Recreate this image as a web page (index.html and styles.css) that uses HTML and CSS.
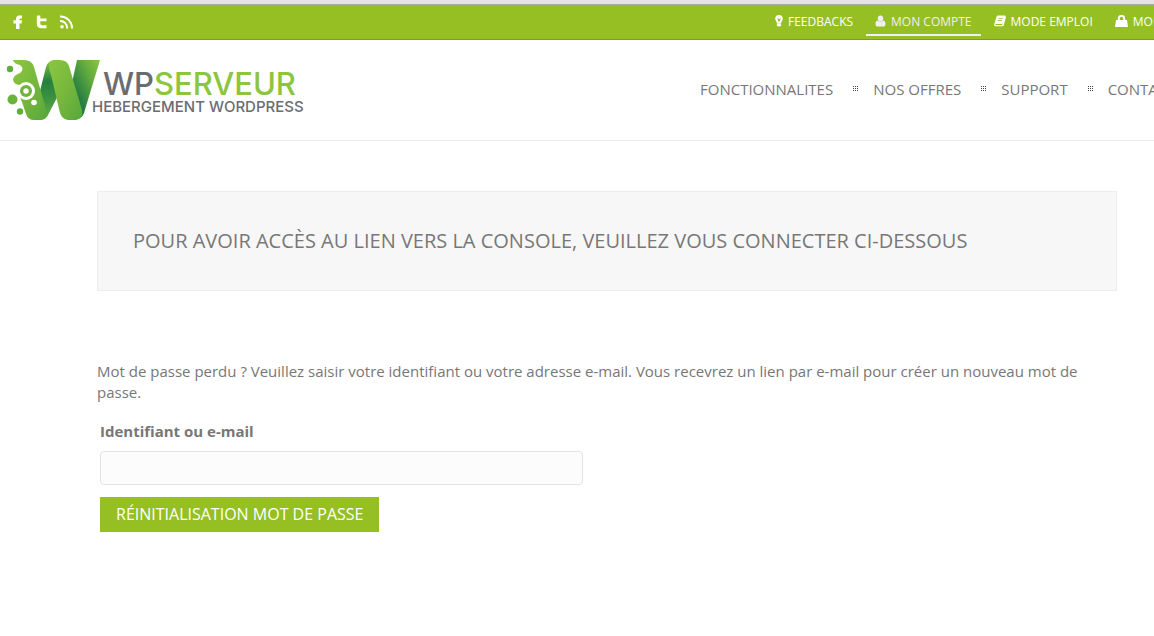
FILE: index.html
```html
<!DOCTYPE html>
<html lang="fr">
<head>
<meta charset="utf-8">
<meta name="viewport" content="width=device-width, initial-scale=1">
<title>WPServeur - Mot de passe perdu</title>
<link rel="stylesheet" href="styles.css">
</head>
<body>
<div class="topbar">
  <div class="social">
    <a href="#" aria-label="Facebook"><svg width="12" height="14" viewBox="0 0 12 14"><path d="M4 14V8.500H1.500V5.300H4V4C4 1.800 5.300 0.600 7 0.600H10V3.500H8.200Q7.500 3.500 7.500 4.300V5.300H10L9.600 8.500H7.500V14Z"/></svg></a>
    <a href="#" aria-label="Twitter"><svg width="12" height="14" viewBox="0 0 12 14"><path d="M1.200 0.500H4.300V3.500H10.500V6.200H4.300V8.500Q4.300 10.200 6 10.200H10.500V13.200H5.500Q0.800 13.200 0.800 8.500V1Z"/></svg></a>
    <a href="#" aria-label="RSS"><svg width="14" height="14" viewBox="0 0 14 14"><circle cx="2" cy="11.700" r="1.800"/><path class="wave" d="M0 6A6.700 6.700 0 0 1 7 13.500M0 1.500A11.500 11.500 0 0 1 12 13.500"/></svg></a>
  </div>
  <nav class="toplinks" aria-label="Compte">
    <a href="#"><svg width="8" height="12" viewBox="0 0 8 12"><path fill-rule="evenodd" d="M4 0A3.800 3.800 0 0 1 7.800 3.800C7.800 5.500 6.300 6.300 6.200 8H1.800C1.700 6.300 0.200 5.500 0.200 3.800A3.800 3.800 0 0 1 4 0ZM2.300 2.600L3.300 6.400H4.500L6 3.200L4 4.200Z"/><path d="M1.900 8.300H6.100V10.300Q5.800 11.500 4 11.500T1.900 10.300Z"/></svg>FEEDBACKS</a>
    <a href="#" class="current"><svg width="11" height="12" viewBox="0 0 10 12"><ellipse cx="5" cy="3.500" rx="2.700" ry="3.100"/><path d="M2.200 5.500C0.300 5.800 0 7.500 0 9Q0 11.500 1.500 11.500H8.500Q10 11.500 10 9C10 7.500 9.700 5.800 7.800 5.500Q5 8 2.200 5.500Z"/></svg>MON COMPTE</a>
    <a href="#"><svg width="12" height="12" viewBox="0 0 12 12"><path fill-rule="evenodd" d="M4 0.500H11L12 2L9.700 10.200Q9.500 11.300 8.300 11.300H1.300Q0 11 0.200 9.200L2.600 1.500Q3 0.500 4 0.500ZM4.500 3L4.300 3.700H8.500L8.700 3ZM3.900 5L3.700 5.700H7.900L8.100 5ZM1.500 9.100L1.300 10H8.200L9.900 4.300L8.400 9.100Z"/></svg>MODE EMPLOI</a>
    <a href="#"><svg width="13" height="12" viewBox="0 0 13 12"><path d="M1 5H12L13 12H0Z"/><path class="handle" d="M3.800 6.500V3.500A2.600 2.600 0 0 1 9.200 3.500V6.500"/></svg>MON PANIER</a>
  </nav>
</div>
<header class="header">
  <a href="#" class="logo">
    <svg class="mark" width="94" height="62" viewBox="0 0 94 62" aria-hidden="true">
      <defs>
        <linearGradient id="front" x1="0" y1="0" x2="1" y2="1"><stop offset="0" stop-color="#8cc63f"/><stop offset=".55" stop-color="#75b63c"/><stop offset="1" stop-color="#55a83d"/></linearGradient>
        <linearGradient id="back" x1="0" y1="0" x2="0" y2="1"><stop offset="0" stop-color="#86c23f"/><stop offset=".15" stop-color="#5aa83f"/><stop offset=".35" stop-color="#25803f"/><stop offset=".6" stop-color="#388f41"/><stop offset="1" stop-color="#69b13f"/></linearGradient>
        <linearGradient id="tail" x1="1" y1="0" x2="0" y2="1"><stop offset="0" stop-color="#8cc63f"/><stop offset=".3" stop-color="#63ac3f"/><stop offset=".7" stop-color="#1f7942"/><stop offset="1" stop-color="#1f7942"/></linearGradient>
      </defs>
      <path fill="url(#back)" d="M33 36L40 8Q42 1 50 1L57 27L43 54Q41 61 32 61Z"/>
      <path fill="url(#tail)" d="M71 1H94L78 54Q76 61 66 61L64 33Z"/>
      <path fill="url(#front)" d="M43 4Q45 1 50 1H54Q61 1 63 7L76 51Q78 60 69 61H62Q56 60 54 54L45 16Q42 8 43 4Z"/>
      <path fill="url(#front)" d="M7 1H18Q26 1 28 8L41 54Q42 61 34 61H28Q22 61 20 55L16 43Q12 36 18 33L13 26Q7 25 7 20Q8 16 14 14Q19 10 14 6Q8 5 7 1Z"/>
      <circle cx="20" cy="32" r="9" fill="#fff"/>
      <circle cx="20" cy="32" r="6" fill="#70b43c"/>
      <circle cx="20" cy="32" r="2.700" fill="#fff"/>
      <circle cx="28" cy="43.500" r="2.800" fill="#fff"/>
      <circle cx="4" cy="10" r="3.200" fill="#61ad3c"/>
      <circle cx="6.500" cy="40.500" r="5" fill="#6bb23c"/>
      <circle cx="14" cy="52.500" r="3.200" fill="#61ad3c"/>
    </svg>
    <span class="wordmark"><span class="name">WP<span class="accent">SERVEUR</span></span><span class="tagline">HEBERGEMENT WORDPRESS</span></span>
  </a>
  <nav class="mainnav" aria-label="Principal">
    <a href="#">FONCTIONNALITES</a>
    <a href="#">NOS OFFRES</a>
    <a href="#">SUPPORT</a>
    <a href="#">CONTACT</a>
  </nav>
</header>
<main class="content">
  <h1 class="notice">POUR AVOIR ACCÈS AU LIEN VERS LA CONSOLE, VEUILLEZ VOUS CONNECTER CI-DESSOUS</h1>
  <p class="intro">Mot de passe perdu ? Veuillez saisir votre identifiant ou votre adresse e-mail. Vous recevrez un lien par e-mail pour créer un nouveau mot de passe.</p>
  <form class="reset">
    <label for="login">Identifiant ou e-mail</label>
    <input type="text" id="login" name="login">
    <button type="submit">RÉINITIALISATION MOT DE PASSE</button>
  </form>
</main>
</body>
</html>
```

FILE: styles.css
```css
* {
  box-sizing: border-box;
}

body {
  margin: 0;
  overflow-x: hidden;
  background: #fff;
  color: #777;
  font-family: "Open Sans", "Noto Sans", sans-serif;
  font-size: 15px;
  line-height: 21px;
}

a {
  color: inherit;
  text-decoration: none;
  white-space: nowrap;
}

.topbar {
  display: flex;
  justify-content: flex-start;
  height: 40px;
  padding-left: 12px;
  border-top: 4px solid #e4e4e4;
  border-bottom: 1px solid #7b9f1c;
  background: #95bf22;
  box-shadow: inset 0 1px #a9aa9f;
  color: #fff;
  overflow: hidden;
}

.topbar svg {
  display: block;
  flex: none;
  fill: currentColor;
}

.social {
  display: flex;
  flex: none;
  align-items: center;
  gap: 12px;
  width: 754px;
}

.social .wave,
.toplinks .handle {
  fill: none;
  stroke: currentColor;
  stroke-width: 2px;
}

.toplinks {
  display: flex;
  flex: none;
  gap: 4px;
  font-size: 12px;
}

.toplinks a {
  display: flex;
  align-items: center;
  gap: 5px;
  height: 32px;
  padding: 4px 9px 0;
  border-bottom: 2px solid transparent;
}

.toplinks .current {
  border-color: #f0f0f0;
  color: #f0f0f0;
}

.header {
  display: flex;
  align-items: center;
  height: 101px;
  padding-left: 6px;
  border-bottom: 1px solid #ebebeb;
  overflow: hidden;
}

.logo {
  display: flex;
  flex: none;
  align-items: center;
  width: 694px;
  color: #6b6c6f;
  font-family: Inter, "Open Sans", sans-serif;
}

.mark {
  flex: none;
}

.wordmark {
  display: flex;
  flex-direction: column;
  margin-left: -8px;
  padding-top: 4px;
  font-weight: 500;
}

.name {
  padding-left: 11px;
  font-size: 31px;
  line-height: 30px;
}

.accent {
  color: #8cc63f;
}

.tagline {
  font-size: 15px;
  line-height: 16px;
}

.mainnav {
  display: flex;
  flex: none;
  padding-bottom: 2px;
}

.mainnav a {
  display: flex;
  align-items: center;
}

.mainnav a + a::before {
  content: "";
  width: 6px;
  height: 6px;
  margin: 0 15px 0 19px;
  background: conic-gradient(#444 25%, transparent 0) 0 0 / 2px 2px;
}

.content {
  padding: 50px 37px 50px 97px;
}

.notice {
  margin: 0 0 70px;
  padding: 34px 35px;
  border: 1px solid #ededed;
  background: #f7f7f7;
  font-size: 20px;
  font-weight: 400;
  line-height: 30px;
}

.intro {
  margin: 0 0 18px;
}

.reset {
  display: flex;
  flex-direction: column;
  align-items: flex-start;
  padding-left: 3px;
}

.reset label {
  margin-bottom: 9px;
  font-weight: 700;
}

.reset input {
  width: 483px;
  max-width: 100%;
  height: 34px;
  margin-bottom: 12px;
  padding: 6px 10px;
  border: 1px solid #e3e3e3;
  border-radius: 4px;
  background: #fcfcfc;
  color: inherit;
  font: inherit;
}

.reset button {
  padding: 6px 16px 7px;
  border: 0;
  background: #95bf22;
  color: #fff;
  font: 16px/22px "Open Sans", "Noto Sans", sans-serif;
}
```
